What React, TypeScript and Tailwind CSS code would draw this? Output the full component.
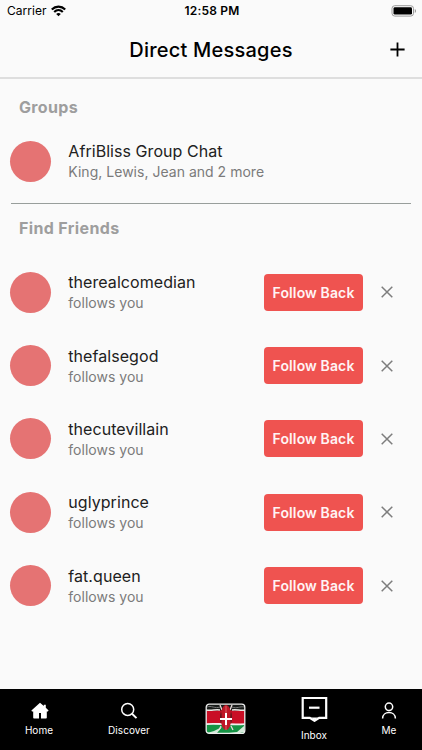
const friends = ['therealcomedian', 'thefalsegod', 'thecutevillain', 'uglyprince', 'fat.queen'];

function StatusBar() {
  return (
    <div className="grid h-[22px] grid-cols-3 items-center pl-[7px] pr-[5px] text-[12px] leading-none text-black">
      <div className="flex items-center gap-[5px]">
        <span className="tracking-[0.02px]">Carrier</span>
        <svg width="15" height="12" viewBox="0 0 15 12" fill="none" stroke="#000" strokeWidth="2.2">
          <path d="M.8 4.5C4.6.7 10.4.7 14.2 4.5" />
          <path d="M3.2 7c2.5-2.4 6.1-2.4 8.6 0" />
          <path d="M7.5 11.3 5.2 9c1.4-1.2 3.2-1.2 4.6 0Z" fill="#000" stroke="none" />
        </svg>
      </div>
      <span className="whitespace-nowrap text-center font-semibold tracking-[0.2px]">12:58 PM</span>
      <svg className="justify-self-end" width="26" height="12" viewBox="0 0 26 12">
        <rect x="1" y=".7" width="21.5" height="10.4" rx="2.8" fill="none" stroke="#9b9b9b" />
        <rect x="2.5" y="2.2" width="18.5" height="7.4" rx="1.4" />
        <path d="M23.8 4v4c1.5-.8 1.5-3.2 0-4Z" fill="#8b8b8b" />
      </svg>
    </div>
  );
}

function Person({ name, note }: { name: string; note: string }) {
  return (
    <>
      <div className="size-[41px] shrink-0 rounded-full bg-[#e57373]" />
      <div className="ml-[17px] flex-1 whitespace-nowrap pt-px">
        <div className="text-[16px] leading-[21px] tracking-[0.06px] text-[#212121]">{name}</div>
        <div className="text-[14px] leading-[20px] tracking-[0.02px] text-[#7b7b7b]">{note}</div>
      </div>
    </>
  );
}

function Flag() {
  return (
    <svg width="42" height="33" viewBox="0 0 42 33">
      <defs>
        <clipPath id="flag"><rect x="1.2" y="1.2" width="38.6" height="29.2" rx="2.5" /></clipPath>
      </defs>
      <g clipPath="url(#flag)">
        <rect width="42" height="33" fill="#181b19" />
        <path d="M2 4c4-2 8 2 13 0M27 4c5 2 8-1 12 0" stroke="#777" fill="none" />
        <path d="M0 7.400h42V21H0Z" fill="#c90e25" />
        <path d="M0 6.800c7 1.200 9-.5 15 .2M27 7c5-.7 9 .9 15-.1" stroke="#e9e9e5" strokeWidth="1.500" fill="none" />
        <path d="M0 21h42v12H0Z" fill="#159344" />
        <path d="M0 21.200c10-1.500 26 1.200 42-.3" stroke="#f2eeee" strokeWidth="1.800" fill="none" />
        <path d="m2 30 7-2 8-4-5 6Zm22 0 8-1 7-6v6l-8 2Z" fill="#d5ebda" />
        <path d="m15 2 2 5M27 2l-2 5M16 23l-2 4M26 23l2 4" fill="none" stroke="#e9dcdc" strokeWidth="1.300" />
        <ellipse cx="21" cy="14.500" rx="5.500" ry="12.500" fill="#bf1726" />
        <path d="M16 8c-1.400 4-1.400 9 0 13 1-4 1-9 0-13Zm10 0c1.400 4 1.400 9 0 13-1-4-1-9 0-13Z" fill="#65141b" />
        <path d="M21 3v24" stroke="#d96469" strokeWidth="1" />
      </g>
      <rect x="1.200" y="1.200" width="38.600" height="29.200" rx="3" fill="none" stroke="#eee" strokeWidth="1.300" />
      <path d="M15 16h12M21 10v12" stroke="#fff" strokeWidth="2" />
    </svg>
  );
}

function BottomNav() {
  const item = 'flex flex-col items-center text-[10px] leading-[12px] tracking-[0.05px]';
  return (
    <nav className="grid h-[61.5px] shrink-0 grid-cols-[78px_102px_92px_84px_66px] bg-black text-white">
      <div className={item}>
        <svg className="mt-[13.5px] mb-[4px] translate-x-px" width="18" height="18" viewBox="0 0 18 18" fill="#fff">
          <path d="M9 .8 12.800 4V2.700h2v3L17.600 8.500l-.8 1H15.800v6.200c0 .5-.3.8-.8.8H10V11H8v5.500H3c-.5 0-.8-.3-.8-.8V9.500H1L.4 8.500Z" />
        </svg>
        <span>Home</span>
      </div>
      <div className={item}>
        <svg className="mt-[13.5px] mb-[4px]" width="18" height="18" viewBox="0 0 18 18" fill="none" stroke="#fff" strokeWidth="1.500">
          <circle cx="7.700" cy="7.400" r="6" />
          <path d="m12 11.700 4.500 4.400" strokeWidth="1.900" />
        </svg>
        <span>Discover</span>
      </div>
      <div className="flex justify-center pt-[14.5px]"><Flag /></div>
      <div className={item}>
        <svg className="mt-[6.5px] mb-[6.5px]" width="27" height="27" viewBox="0 0 27 27" fill="none" stroke="#fff" strokeWidth="2.200">
          <path d="M1.700 3h23.500v19.800h-7l-4.700 3-4.700-3H1.700Z" />
          <path d="M8 12.700h10.500" />
          <path d="M10 22.500h7l-3.500 2.500Z" fill="#fff" stroke="none" />
        </svg>
        <span>Inbox</span>
      </div>
      <div className={item}>
        <svg className="mt-[13.5px] mb-[4px]" width="18" height="18" viewBox="0 0 18 18" fill="none" stroke="#fff" strokeWidth="1.500">
          <circle cx="9" cy="4.800" r="3.700" />
          <path d="M2.600 16.500c0-8 12.800-8 12.800 0" />
        </svg>
        <span>Me</span>
      </div>
    </nav>
  );
}

export default function App() {
  return (
    <div className="flex h-[750px] w-[422px] flex-col overflow-hidden bg-[#fafafa] font-['Inter',sans-serif]">
      <StatusBar />
      <header className="grid h-[57px] shrink-0 grid-cols-[50px_1fr_50px] items-center border-b-2 border-[#dedede] text-black">
        <h1 className="col-start-2 whitespace-nowrap text-center text-[20px] font-[450] tracking-[0.22px]">Direct Messages</h1>
        <svg className="-mt-px ml-[18px]" width="15" height="15" viewBox="0 0 15 15" stroke="#000" strokeWidth="1.800">
          <path d="M.4 7.500h14.200M7.500.4v14.200" />
        </svg>
      </header>
      <main className="flex-1">
        <h2 className="ml-[19px] mt-[16px] text-[16px] font-bold leading-[24px] tracking-[0.33px] text-[#9e9e9e]">Groups</h2>
        <div className="mt-[21px] flex h-[42px] items-center pl-[10.3px]">
          <Person name="AfriBliss Group Chat" note="King, Lewis, Jean and 2 more" />
        </div>
        <div className="mx-[11px] mt-[21px] h-px bg-[#989e9b]" />
        <h2 className="ml-[19px] mt-[12px] text-[16px] font-bold leading-[24px] tracking-[0.36px] text-[#9e9e9e]">Find Friends</h2>
        <ul className="mt-[15.7px]">
          {friends.map((name) => (
            <li key={name} className="flex h-[73.3px] items-center pl-[10.3px] pr-[29px]">
              <Person name={name} note="follows you" />
              <button className="h-[37px] w-[99px] whitespace-nowrap rounded-[4px] bg-[#ef5350] text-[14px] font-semibold tracking-[0.12px] text-[#fff4f4]">Follow Back</button>
              <svg className="ml-[18px]" width="12" height="12" viewBox="0 0 12 12" stroke="#7d7d7d" strokeWidth="1.500">
                <path d="m.7.7 10.600 10.600M11.300.7.7 11.300" />
              </svg>
            </li>
          ))}
        </ul>
      </main>
      <BottomNav />
    </div>
  );
}
